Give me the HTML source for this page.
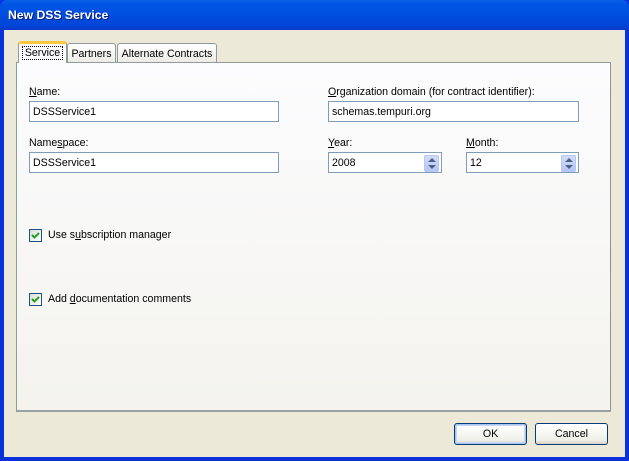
<!DOCTYPE html>
<html><head><style>
*{margin:0;padding:0;box-sizing:border-box}
body{width:629px;height:461px;overflow:hidden;font-family:Tahoma,"Liberation Sans",sans-serif;font-size:10.6px;background:#0831d9;position:relative}
.win{position:absolute;left:0;top:0;width:629px;height:461px;border-radius:7px 7px 0 0;background:linear-gradient(#0a5fe8,#0055e5 4px,#0146d8 25px,#0a3cc8 29px,#0831d9 30px)}
.title{position:absolute;left:8px;top:8px;color:#fff;font-weight:bold;font-size:12.2px;text-shadow:1px 1px #0a1e7a}
.client{position:absolute;left:4px;top:30px;width:621px;height:427px;background:#ece9d8}
.panel{position:absolute;left:16px;top:62px;width:595px;height:350px;border:1px solid #919b9c;border-right-color:#8c9493;border-bottom:2px solid #99a0a1;background:linear-gradient(#fcfcfe,#f4f3ee)}
.tab{position:absolute;height:19px;border:1px solid #919b9c;border-bottom:none;border-radius:3px 3px 0 0;background:linear-gradient(#fff,#ecebe6);padding:4px 0 0;text-align:center;color:#000;white-space:nowrap}
.tab.act{height:22px;background:#fcfcfe;border-top:3px solid #ffc83c;padding-top:3px;z-index:2}
.tab.act span{border:1px dotted #000;padding:0 2px}
.lbl{position:absolute;color:#000;white-space:nowrap}
.in{position:absolute;height:21px;border:1px solid #7f9db9;background:#fff;padding:4px 0 0 3px;color:#000}
.spin{position:absolute;right:2px;top:2px;width:15px;height:17px;background:linear-gradient(#d2dcf8,#b4c6f6);border:1px solid #b5c7f2;border-radius:2px}
.spin:before,.spin:after{content:"";position:absolute;left:3px;border-left:4px solid transparent;border-right:4px solid transparent}
.spin:before{top:2px;border-bottom:4px solid #4d6185}
.spin:after{bottom:2px;border-top:4px solid #4d6185}
.cb{position:absolute;width:13px;height:13px;border:1px solid #1c5180;background:linear-gradient(135deg,#dcdcd7,#fff)}
.btn{position:absolute;height:22px;border:1px solid #003c74;border-radius:3px;background:linear-gradient(#fff,#f0f0ea 80%,#d6d0c5);text-align:center;padding-top:4px;color:#000}
u{text-decoration:underline}
</style></head><body>
<div class="win">
<div class="title">New DSS Service</div>
<div class="client"></div>
<div class="tab" style="left:67px;top:43px;width:49px">Partners</div>
<div class="tab" style="left:117px;top:43px;width:100px">Alternate Contracts</div>
<div class="panel"></div>
<div class="tab act" style="left:18px;top:41px;width:49px"><span>Service</span></div>

<div class="lbl" style="left:29px;top:86px"><u>N</u>ame:</div>
<div class="in" style="left:29px;top:101px;width:250px">DSSService1</div>
<div class="lbl" style="left:29px;top:137px">Name<u>s</u>pace:</div>
<div class="in" style="left:29px;top:152px;width:250px">DSSService1</div>

<div class="lbl" style="left:328px;top:86px"><u>O</u>rganization domain (for contract identifier):</div>
<div class="in" style="left:328px;top:101px;width:251px">schemas.tempuri.org</div>
<div class="lbl" style="left:328px;top:137px"><u>Y</u>ear:</div>
<div class="in" style="left:328px;top:152px;width:114px">2008<div class="spin"></div></div>
<div class="lbl" style="left:466px;top:137px"><u>M</u>onth:</div>
<div class="in" style="left:466px;top:152px;width:113px">12<div class="spin"></div></div>

<div class="cb" style="left:29px;top:229px"><svg width="11" height="11" style="position:absolute;left:0;top:0"><path d="M2 5 L4.5 7.5 L9 3" stroke="#21a121" stroke-width="2" fill="none"/></svg></div>
<div class="lbl" style="left:48px;top:229px">Use s<u>u</u>bscription manager</div>
<div class="cb" style="left:29px;top:293px"><svg width="11" height="11" style="position:absolute;left:0;top:0"><path d="M2 5 L4.5 7.5 L9 3" stroke="#21a121" stroke-width="2" fill="none"/></svg></div>
<div class="lbl" style="left:48px;top:293px">Add <u>d</u>ocumentation comments</div>

<div class="btn" style="left:454px;top:423px;width:73px;box-shadow:inset 0 0 0 1px #a9c2f2,inset 0 0 0 2px #c8d8f8">OK</div>
<div class="btn" style="left:535px;top:423px;width:73px">Cancel</div>
</div>
</body></html>
